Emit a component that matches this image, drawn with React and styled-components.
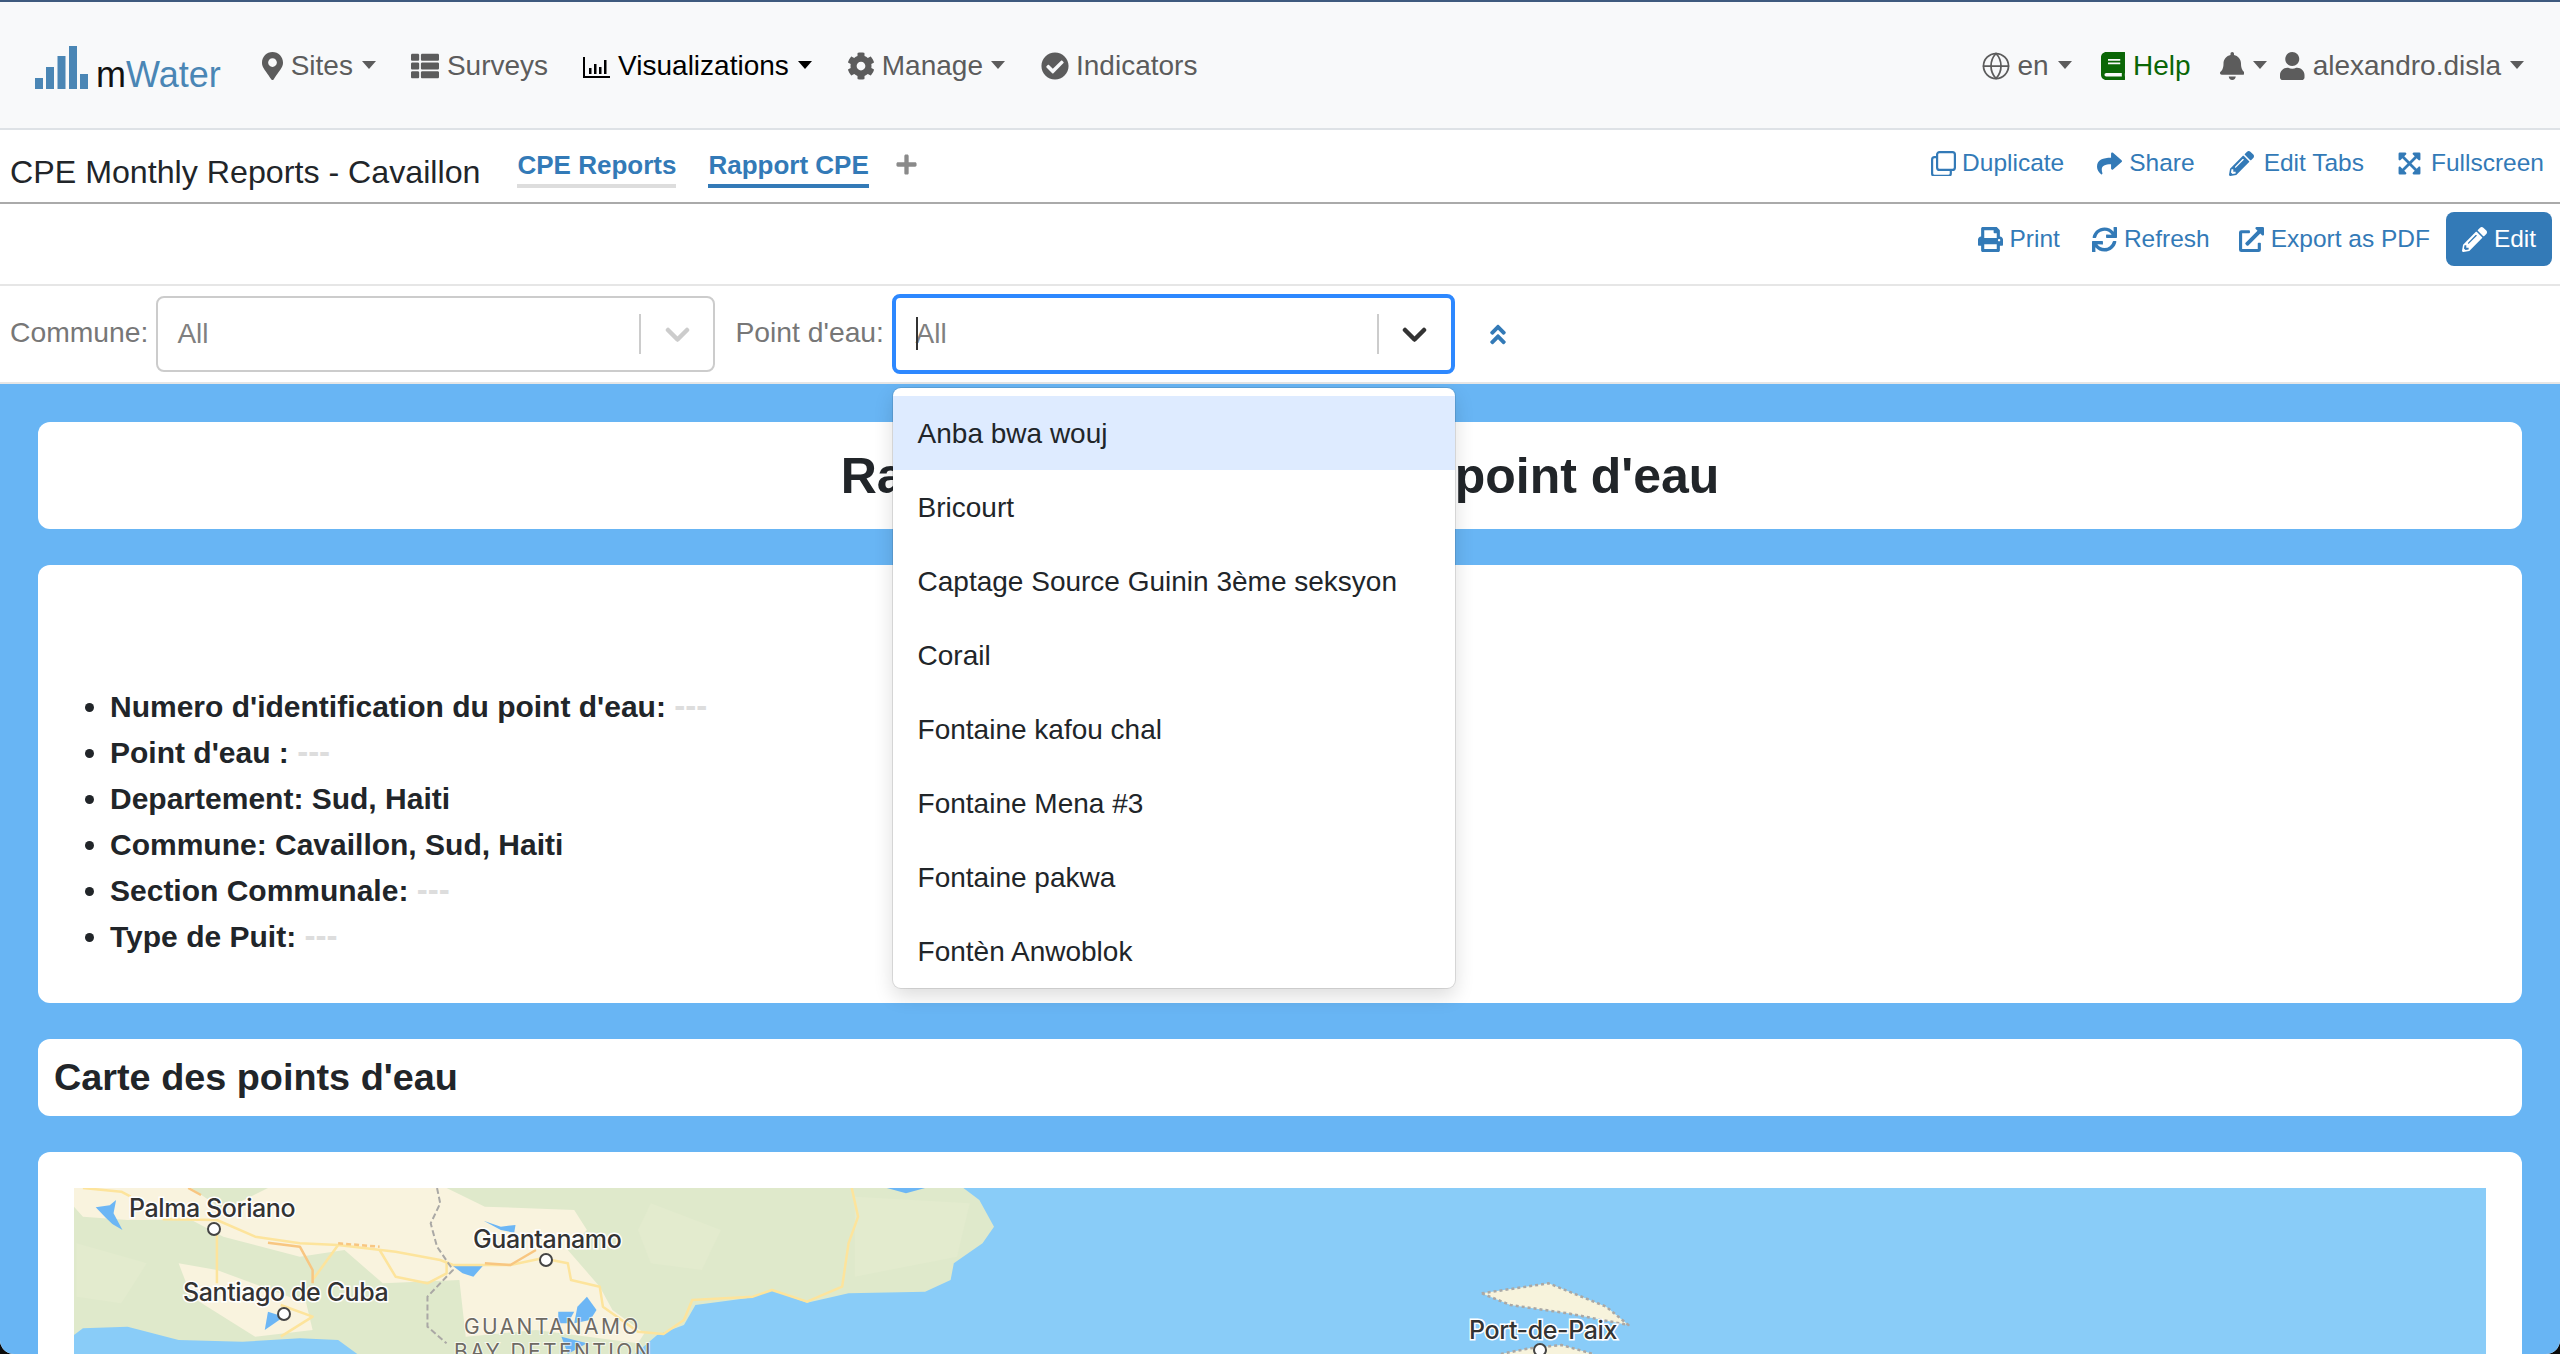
import React from "react";
import styled, { createGlobalStyle } from "styled-components";
import {
  FaMapMarkerAlt, FaThList, FaCog, FaCheckCircle, FaBook, FaBell, FaUser, FaShare,
  FaPencilAlt, FaExpandArrowsAlt, FaPrint, FaSync, FaExternalLinkAlt, FaAngleDoubleUp, FaPlus,
} from "react-icons/fa";
import { Globe } from "lucide-react";

const Global = createGlobalStyle`
  html, body { margin: 0; padding: 0; background: #0c0c0c; }
  body { font-family: "Liberation Sans", Arial, sans-serif; color: #212529; }
`;

const Frame = styled.div`
  width: 2560px; height: 1354px; overflow: hidden; position: relative;
  background: #fff; border-radius: 0 0 14px 14px;
  display: flex; flex-direction: column;
`;
const Navbar = styled.nav`
  height: 124px; flex: none; display: flex; align-items: center;
  background: #f8f9fa; border-top: 2px solid #3e5a7e; border-bottom: 2px solid #dee2e6;
  padding: 2px 36px 0 35px; box-sizing: content-box;
`;
const Logo = styled.div`display: flex; align-items: flex-end; gap: 8px; height: 44px; margin-top: 2px;`;
const LogoWord = styled.span`
  font-size: 36px; line-height: 1; color: #4a86b5; position: relative; top: 4px;
  b { font-weight: 400; color: #111; }
`;
const NavItem = styled.div`
  display: flex; align-items: center; gap: ${p => p.$gap ?? 8}px; margin-left: ${p => p.$ml || 0}px;
  font-size: 28px; line-height: 40px; white-space: nowrap;
  color: ${p => p.$color || "#5c5c5c"};
  svg { height: 28px; width: 28px; display: block; flex: none; }
`;
const PinIcon = styled(FaMapMarkerAlt)`&& { width: 21px; }`;
const BookIcon = styled(FaBook)`&& { width: 24.5px; }`;
const BellIcon = styled(FaBell)`&& { width: 24.5px; }`;
const UserIcon = styled(FaUser)`&& { width: 24.5px; }`;
const GlobeIcon = styled(Globe)`&& { width: 30px; height: 30px; margin: -1px -1.5px; }`;
const ChartIcon = styled.svg`&& { width: 27px; height: 21px; margin-top: 2px; }`;
const Caret = styled.i`
  display: block; width: 0; height: 0; margin-left: 1px; flex: none; margin-top: -3px;
  border-left: 7.5px solid transparent; border-right: 7.5px solid transparent; border-top: 8px solid currentColor;
`;
const Spacer = styled.div`flex: 1;`;

const TabBar = styled.div`
  height: 72px; flex: none; display: flex; align-items: flex-start; box-sizing: content-box;
  border-bottom: 2px solid #aaa; padding: 0 16px 0 10px;
`;
const Title = styled.div`font-size: 32.2px; line-height: 40px; margin-top: 22px; color: #212529; white-space: nowrap;`;
const Tab = styled.div`
  margin: 18px 0 0 ${p => p.$ml}px; font-size: 26px; font-weight: 700; line-height: 34px; color: #337ab7;
  padding-bottom: 2px; border-bottom: 4px solid ${p => (p.$active ? "#337ab7" : "#ddd")}; white-space: nowrap;
`;
const AddTab = styled.div`
  margin: 23px 0 0 26px; color: #8a8a8a;
  svg { width: 23px; height: 23px; display: block; }
`;
const LinkItem = styled.div`
  display: flex; align-items: center; gap: ${p => p.$gap ?? 7}px; margin-left: ${p => p.$ml || 0}px;
  font-size: 24.5px; line-height: 34px; color: #337ab7; white-space: nowrap;
  svg { height: 25px; width: 25px; display: block; flex: none; }
`;
const TabActions = styled.div`display: flex; margin-top: 16px;`;

const Toolbar = styled.div`
  flex: none; box-sizing: content-box; display: flex; justify-content: flex-end;
  align-items: flex-start; border-bottom: 2px solid #e6e6e6; padding: 8px 8px 0 0; height: 72px;
`;
const ToolLinks = styled.div`display: flex; height: 54px; align-items: center;`;
const EditButton = styled.div`
  width: 106px; height: 54px; margin-left: 16px; border-radius: 8px; background: #337ab7; color: #fff;
  display: flex; align-items: center; justify-content: center; gap: 7px; font-size: 24.5px;
  svg { height: 25px; width: 25px; display: block; }
`;

const FilterBar = styled.div`
  height: 96px; flex: none; box-sizing: content-box; display: flex; align-items: center; padding-left: 10px;
  border-bottom: 2px solid #e6e6e6; position: relative; z-index: 2; background: #fff;
`;
const FilterLabel = styled.label`
  font-size: 28.3px; line-height: 34px; color: #777; margin: -4px 0 0 ${p => p.$ml || 0}px; white-space: nowrap;
`;
const Select = styled.div`
  position: relative; box-sizing: border-box; display: flex; align-items: center;
  width: ${p => (p.$focused ? 563 : 559)}px; height: ${p => (p.$focused ? 80 : 76)}px;
  margin-left: ${p => (p.$focused ? 7.6 : 8)}px;
  border: ${p => (p.$focused ? "4px solid #2d88ff" : "2px solid #ccc")}; border-radius: 8px; background: #fff;
  padding-left: ${p => (p.$focused ? 20 : 19)}px;
`;
const SelectValue = styled.span`
  flex: 1; font-size: 28px; line-height: 34px; color: #808080; position: relative;
`;
const Cursor = styled.i`
  position: absolute; left: 0; top: 0; width: 2px; height: 33px; background: #333;
`;
const SelectSep = styled.i`display: block; width: 2px; height: 40px; background: #ccc; flex: none;`;
const SelectArrow = styled.div`
  width: 72px; flex: none; display: flex; justify-content: center; color: ${p => p.$color};
  svg { width: 25px; height: 15px; display: block; }
`;
const Collapse = styled.div`
  margin-left: 35px; color: #337ab7;
  svg { height: 25px; width: 16px; display: block; }
`;
const Menu = styled.div`
  position: absolute; left: -3px; right: -4px; top: calc(100% + 18px); box-sizing: border-box;
  height: 600px; padding: 8px 0 0; overflow: hidden; background: #fff; border-radius: 8px;
  box-shadow: 0 0 0 1px rgba(0,0,0,.1), 0 8px 20px rgba(0,0,0,.14);
`;
const Option = styled.div`
  height: 74px; box-sizing: border-box; display: flex; align-items: center; padding: 1px 0 0 25px; font-size: 28px; color: #212529;
  background: ${p => (p.$active ? "#deebff" : "transparent")}; white-space: nowrap;
`;

const Canvas = styled.main`
  flex: 1; min-height: 0; overflow: hidden; background: #68b5f4; padding: 38px 38px 0;
  display: flex; flex-direction: column; gap: 36px;
`;
const Card = styled.section`
  flex: none; background: #fff; border-radius: 12px 12px ${p => (p.$open ? "0 0" : "12px 12px")};
  height: ${p => p.$h}px; box-sizing: border-box;
`;
const Heading = styled.h1`
  margin: 0; text-align: center; font-size: 50px; line-height: 109px; font-weight: 700; color: #212529; white-space: nowrap;
`;
const InfoList = styled.ul`
  margin: 0; padding: 119px 0 0 72px; font-size: 30px; font-weight: 700; line-height: 46px; color: #212529;
`;
const Dash = styled.span`color: #ddd; font-size: 33px; line-height: 30px;`;
const Sub = styled.h2`
  margin: 0; padding-left: 16px; font-size: 37.8px; line-height: 77px; font-weight: 700; color: #212529; white-space: nowrap;
`;
const MapCard = styled(Card)`padding: 36px 36px 0;`;
const MapSvg = styled.svg`display: block; width: 2412px; height: 166px; background: #89ccf8;`;
const CityLabel = styled.text`
  font-family: Inter, "Liberation Sans", sans-serif; font-weight: 500; font-size: 25px; fill: #333;
  stroke: #fff; stroke-width: 3px; paint-order: stroke; letter-spacing: -0.4px;
`;
const AreaLabel = styled.text`
  font-family: Inter, "Liberation Sans", sans-serif; font-size: 21px; fill: #6e6a64; letter-spacing: 2.4px;
  stroke: rgba(255,255,255,.7); stroke-width: 2px; paint-order: stroke;
`;

const ChartLine = () => (
  <ChartIcon viewBox="0 0 27 21" fill="currentColor"><path d="M0 0h2v19h25v2H0z" /><path d="M6 11h2.500v6H6zM11 7h2.500v10H11zM16 10h2.500v7H16zM21 3h2.500v14H21z" /></ChartIcon>
);
const DuplicateIcon = () => (
  <svg viewBox="0 0 25 25" fill="none" stroke="currentColor" strokeWidth="2.2">
    <rect x="6.100" y="1.100" width="17.800" height="17.800" rx="2.500" />
    <path d="M6 6.200H3.600A2.500 2.500 0 0 0 1.100 8.700v13.700a2.500 2.500 0 0 0 2.500 2.500h13.700a2.500 2.500 0 0 0 2.500-2.500V19" />
  </svg>
);
const Chevron = () => (
  <svg viewBox="0 0 25 15" fill="none" stroke="currentColor" strokeWidth="4.500" strokeLinecap="round" strokeLinejoin="round"><path d="M3 3l9.500 9.500L22 3" /></svg>
);

const Poly = ({ pts, fill }) => <polygon points={pts} fill={fill} />;
const Road = ({ pts, color = "#fde49c", w = 2.5, dash }) => (
  <polyline points={pts} fill="none" stroke={color} strokeWidth={w} strokeDasharray={dash} strokeLinejoin="round" vectorEffect="non-scaling-stroke" />
);

const MapDrawing = () => (
  <MapSvg viewBox="74 1188 2412 166" aria-label="map">
    <g transform="translate(0 1130) scale(.638 .33333)">
      <Poly fill="#dfe9cb" pts="116,174 1510,174 1535,210 1558,290 1540,340 1495,400 1490,450 1450,485 1330,490 1265,518 1210,480 1170,505 1090,525 1072,585 1030,615 1015,640 995,672 560,672 530,630 470,625 380,635 280,630 200,590 130,595 116,615" />
      <Poly fill="#f9f3de" pts="116,174 300,174 350,240 420,174 700,174 760,230 900,240 920,300 890,360 940,470 960,540 1010,610 1000,640 840,600 730,620 720,450 600,460 540,360 470,380 350,320 300,270 200,270 130,260 116,230" />
      <Poly fill="#f9f3de" pts="280,400 340,420 480,520 490,600 400,620 300,500" />
      <Poly fill="#e3ebce" pts="1020,220 1130,300 1100,420 1020,400 1000,300" />
      <Poly fill="#e3ebce" pts="1340,200 1520,220 1500,380 1340,440" />
      <Poly fill="#e3ebce" pts="120,340 230,400 190,520 120,500" />
      <Poly fill="#6cb6f5" pts="150,232 172,226 182,210 178,250 192,300 176,282 165,262" />
      <Poly fill="#6cb6f5" pts="758,272 785,290 808,285 806,308 785,300" />
      <Poly fill="#6cb6f5" pts="710,408 758,405 742,440 725,430" />
      <Poly fill="#6cb6f5" pts="905,530 920,500 935,540 925,570 900,580" />
      <Poly fill="#6cb6f5" pts="875,545 900,545 890,580 875,580" />
      <Poly fill="#6cb6f5" pts="880,620 920,640 890,672" />
      <Poly fill="#6cb6f5" pts="420,545 445,560 415,600" />
      <Poly fill="#6cb6f5" pts="1390,174 1450,174 1420,190" />
      <Road pts="130,174 190,185 205,200" />
      <Road pts="255,268 340,270 400,320 470,340 530,345 620,365 690,390 710,405 760,405 800,405 850,385 890,400 895,450 940,470 945,530 1000,605 1040,612 1072,570 1085,510 1180,500 1210,480 1265,515 1320,470 1330,340 1345,260 1335,174" />
      <Road pts="340,300 340,460" />
      <Road pts="530,345 490,450" />
      <Road pts="595,360 620,440 670,460 700,430 700,400" />
      <Road pts="440,525 490,560 440,620" />
      <Road color="#f8c681" pts="420,338 470,350 490,420 490,460" />
      <Road color="#f8c681" pts="760,400 800,405 840,360" />
      <Road color="#f8c681" pts="530,340 595,350" dash="5 3" />
      <Road color="#f8c681" pts="295,174 315,195" />
      <Road color="#aaa8a5" w={2} dash="6 3" pts="685,174 690,220 675,280 685,350 710,420 670,500 670,590 700,640" />
    </g>
    <g transform="translate(1000 1130) scale(.638 .33333)">
      <Poly fill="#f7f3dc" pts="755,490 860,460 950,530 985,585 890,550 800,525" />
      <Road color="#aaa8a5" w={2.500} dash="3 3" pts="755,490 860,460 950,530 985,585 890,550 800,525 755,490" />
      <Poly fill="#f7f3dc" pts="785,672 830,655 880,645 930,672" />
      <Road color="#aaa8a5" w={2.500} dash="3 3" pts="785,672 830,655 880,645 930,672" />
    </g>
    <circle cx="214" cy="1229" r="6" fill="#fff" stroke="#444" strokeWidth="2" />
    <circle cx="546" cy="1260" r="6" fill="#fff" stroke="#444" strokeWidth="2" />
    <circle cx="284" cy="1314" r="6" fill="#fff" stroke="#444" strokeWidth="2" />
    <circle cx="1540" cy="1350" r="6" fill="#fff" stroke="#444" strokeWidth="2" />
    <CityLabel x="129" y="1217">Palma Soriano</CityLabel>
    <CityLabel x="473" y="1248">Guantanamo</CityLabel>
    <CityLabel x="183" y="1301">Santiago de Cuba</CityLabel>
    <CityLabel x="1469" y="1339">Port-de-Paix</CityLabel>
    <AreaLabel x="464" y="1334">GUANTANAMO</AreaLabel>
    <AreaLabel x="454" y="1359">BAY DETENTION</AreaLabel>
  </MapSvg>
);

const options = ["Anba bwa wouj", "Bricourt", "Captage Source Guinin 3ème seksyon", "Corail", "Fontaine kafou chal", "Fontaine Mena #3", "Fontaine pakwa", "Fontèn Anwoblok"];

export default function App() {
  return (
    <>
      <Global />
      <Frame>
        <Navbar>
          <Logo>
            <svg width="53" height="43" viewBox="0 0 53 43" fill="#4a86b5"><path d="M0 32h8v11H0zM11 21h8v22h-8zM22.500 10h8v33h-8zM34 0h8v43h-8zM45 28h8v15h-8z" /></svg>
            <LogoWord><b>m</b>Water</LogoWord>
          </Logo>
          <NavItem $ml={41}><PinIcon />Sites<Caret /></NavItem>
          <NavItem $ml={35}><FaThList />Surveys</NavItem>
          <NavItem $ml={35} $color="#000"><ChartLine />Visualizations<Caret /></NavItem>
          <NavItem $ml={35} $gap={7}><FaCog />Manage<Caret /></NavItem>
          <NavItem $ml={36} $gap={7}><FaCheckCircle />Indicators</NavItem>
          <Spacer />
          <NavItem><GlobeIcon strokeWidth={1.4} />en<Caret /></NavItem>
          <NavItem $ml={29} $color="#0a6606"><BookIcon />Help</NavItem>
          <NavItem $ml={29}><BellIcon /><Caret /></NavItem>
          <NavItem $ml={13}><UserIcon />alexandro.disla<Caret /></NavItem>
        </Navbar>
        <TabBar>
          <Title>CPE Monthly Reports - Cavaillon</Title>
          <Tab $ml={37}>CPE Reports</Tab>
          <Tab $ml={32} $active>Rapport CPE</Tab>
          <AddTab><FaPlus /></AddTab>
          <Spacer />
          <TabActions>
            <LinkItem $gap={6}><DuplicateIcon />Duplicate</LinkItem>
            <LinkItem $ml={33}><FaShare />Share</LinkItem>
            <LinkItem $ml={34} $gap={10}><FaPencilAlt />Edit Tabs</LinkItem>
            <LinkItem $ml={33} $gap={9}><FaExpandArrowsAlt />Fullscreen</LinkItem>
          </TabActions>
        </TabBar>
        <Toolbar>
          <ToolLinks>
            <LinkItem><FaPrint />Print</LinkItem>
            <LinkItem $ml={32}><FaSync />Refresh</LinkItem>
            <LinkItem $ml={29}><FaExternalLinkAlt />Export as PDF</LinkItem>
          </ToolLinks>
          <EditButton><FaPencilAlt />Edit</EditButton>
        </Toolbar>
        <FilterBar>
          <FilterLabel>Commune:</FilterLabel>
          <Select>
            <SelectValue>All</SelectValue>
            <SelectSep />
            <SelectArrow $color="#ccc"><Chevron /></SelectArrow>
          </Select>
          <FilterLabel $ml={20}>Point d'eau:</FilterLabel>
          <Select $focused>
            <SelectValue><Cursor />All</SelectValue>
            <SelectSep />
            <SelectArrow $color="#333"><Chevron /></SelectArrow>
            <Menu>
              {options.map((o, i) => <Option key={o} $active={i === 0}>{o}</Option>)}
            </Menu>
          </Select>
          <Collapse><FaAngleDoubleUp /></Collapse>
        </FilterBar>
        <Canvas>
          <Card $h={107}><Heading>Rapport mensuel CPE du point d'eau</Heading></Card>
          <Card $h={438}>
            <InfoList>
              <li>Numero d'identification du point d'eau: <Dash>---</Dash></li>
              <li>Point d'eau : <Dash>---</Dash></li>
              <li>Departement: Sud, Haiti</li>
              <li>Commune: Cavaillon, Sud, Haiti</li>
              <li>Section Communale: <Dash>---</Dash></li>
              <li>Type de Puit: <Dash>---</Dash></li>
            </InfoList>
          </Card>
          <Card $h={77}><Sub>Carte des points d'eau</Sub></Card>
          <MapCard $h={300} $open><MapDrawing /></MapCard>
        </Canvas>
      </Frame>
    </>
  );
}
